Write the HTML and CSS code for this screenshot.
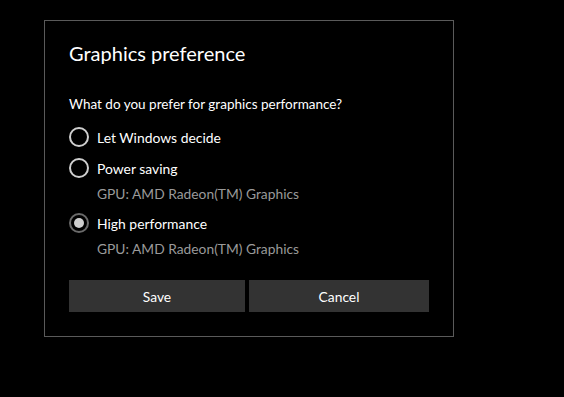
FILE: index.html
```html
<!DOCTYPE html>
<html>
<head>
<meta charset="utf-8">
<link rel="stylesheet" href="styles.css">
</head>
<body>
<div class="dialog">
  <div class="title">Graphics preference</div>
  <div class="question">What do you prefer for graphics performance?</div>
  <div class="options">
    <div class="option opt-first"><span class="radio"></span><span class="label">Let Windows decide</span></div>
    <div class="option opt-second"><span class="radio"></span><span class="label">Power saving</span></div>
    <div class="gpu">GPU: AMD Radeon(TM) Graphics</div>
    <div class="option opt-third"><span class="radio checked"></span><span class="label">High performance</span></div>
    <div class="gpu">GPU: AMD Radeon(TM) Graphics</div>
  </div>
  <div class="buttons">
    <button class="btn btn-save">Save</button>
    <button class="btn btn-cancel">Cancel</button>
  </div>
</div>
</body>
</html>
```
FILE: styles.css
```css
html, body {
  margin: 0;
  padding: 0;
  background: #000;
  width: 564px;
  height: 397px;
  overflow: hidden;
}
body {
  font-family: Lato, "Open Sans", sans-serif;
  color: #fff;
}
.dialog {
  margin: 20px 0 0 44px;
  border: 1px solid #5a5a5a;
  background: #000;
  padding: 18px 23px 0 24px;
  box-sizing: border-box;
  width: 410px;
  height: 317px;
  display: flex;
  flex-direction: column;
}
.title {
  font-size: 20px;
  line-height: 28px;
  height: 28px;
}
.question {
  margin-top: 27px;
  font-size: 13.5px;
  line-height: 20px;
}
.options {
  display: flex;
  flex-direction: column;
  margin-top: 13px;
}
.option {
  display: flex;
  align-items: center;
  height: 20px;
  font-size: 13.9px;
}
.opt-second { margin-top: 11px; }
.opt-third { margin-top: 9px; }
.radio {
  width: 20px;
  height: 20px;
  box-sizing: border-box;
  border: 2px solid #cfcfcf;
  border-radius: 50%;
  margin-right: 8px;
  display: flex;
  align-items: center;
  justify-content: center;
}
.radio.checked {
  border-color: #6a6a6a;
}
.radio.checked::after {
  content: "";
  width: 10px;
  height: 10px;
  border-radius: 50%;
  background: #cfcfcf;
}
.gpu {
  margin-top: 6px;
  padding-left: 28px;
  font-size: 13.8px;
  line-height: 20px;
  color: #9a9a9a;
}
.buttons {
  display: flex;
  gap: 4px;
  margin-top: 21px;
}
.btn {
  height: 32px;
  background: #333;
  border: none;
  color: #fff;
  font-family: Lato, "Open Sans", sans-serif;
  font-size: 13.8px;
  padding: 0;
}
.btn-save { width: 176px; }
.btn-cancel { width: 180px; }
```
